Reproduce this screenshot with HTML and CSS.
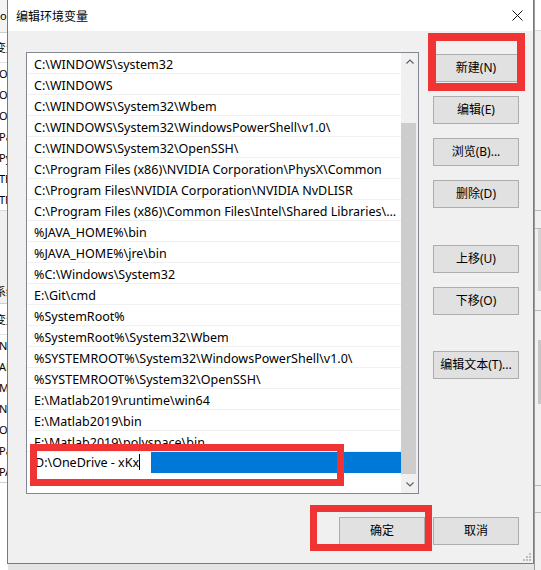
FILE: index.html
```html
<!DOCTYPE html>
<html lang="zh-CN">
<head>
<meta charset="utf-8">
<title>编辑环境变量</title>
<link rel="stylesheet" href="styles.css">
</head>
<body>
<div class="desk">
  <div class="bgwin">
    <div class="bg-head"><span class="frag">Doc</span></div>
    <div class="bg-table">
      <div class="bg-row hdr"><span class="frag">变量</span></div>
      <div class="bg-row"><span class="frag">OneDrive</span></div>
      <div class="bg-row"><span class="frag">OneDrive</span></div>
      <div class="bg-row"><span class="frag">OneDrive</span></div>
      <div class="bg-row"><span class="frag">Path</span></div>
      <div class="bg-row"><span class="frag">Python</span></div>
      <div class="bg-row"><span class="frag">TEMP</span></div>
      <div class="bg-row"><span class="frag">TMP</span></div>
    </div>
    <div class="bg-gap"></div>
    <div class="bg-title"><span class="frag">系统</span></div>
    <div class="bg-table two">
      <div class="bg-row hdr"><span class="frag">变量</span></div>
      <div class="bg-row"><span class="frag">NUMBER</span></div>
      <div class="bg-row"><span class="frag">ANDROID</span></div>
      <div class="bg-row"><span class="frag">MATLAB</span></div>
      <div class="bg-row"><span class="frag">NUMBER</span></div>
      <div class="bg-row"><span class="frag">OS</span></div>
      <div class="bg-row"><span class="frag">Path</span></div>
      <div class="bg-row"><span class="frag">PATHEXT</span></div>
    </div>
  </div>

  <div class="rightwin">
    <div class="rw-top"></div>
    <div class="rw-line l1"></div>
    <div class="rw-line l2"></div>
    <div class="rw-bar b1"></div>
    <div class="rw-line l3"></div>
    <div class="rw-bar b2"></div>
    <div class="rw-line l4"></div>
    <div class="rw-line l5"></div>
  </div>

  <div class="dialog">
    <div class="titlebar">
      <span class="title">编辑环境变量</span>
      <svg class="close" width="11" height="11" viewBox="0 0 11 11"><path d="M0.5 0.5 L10.5 10.5 M10.5 0.5 L0.5 10.5" stroke="#111" stroke-width="1" fill="none"/></svg>
    </div>
    <div class="body">
      <div class="main">
        <div class="listbox">
          <div class="rows">
            <div class="row">C:\WINDOWS\system32</div>
            <div class="row">C:\WINDOWS</div>
            <div class="row">C:\WINDOWS\System32\Wbem</div>
            <div class="row">C:\WINDOWS\System32\WindowsPowerShell\v1.0\</div>
            <div class="row">C:\WINDOWS\System32\OpenSSH\</div>
            <div class="row">C:\Program Files (x86)\NVIDIA Corporation\PhysX\Common</div>
            <div class="row">C:\Program Files\NVIDIA Corporation\NVIDIA NvDLISR</div>
            <div class="row">C:\Program Files (x86)\Common Files\Intel\Shared Libraries\...</div>
            <div class="row">%JAVA_HOME%\bin</div>
            <div class="row">%JAVA_HOME%\jre\bin</div>
            <div class="row">%C:\Windows\System32</div>
            <div class="row">E:\Git\cmd</div>
            <div class="row">%SystemRoot%</div>
            <div class="row">%SystemRoot%\System32\Wbem</div>
            <div class="row">%SYSTEMROOT%\System32\WindowsPowerShell\v1.0\</div>
            <div class="row">%SYSTEMROOT%\System32\OpenSSH\</div>
            <div class="row">E:\Matlab2019\runtime\win64</div>
            <div class="row">E:\Matlab2019\bin</div>
            <div class="row">E:\Matlab2019\polyspace\bin</div>
            <div class="row sel"><span class="edit">D:\OneDrive - xKx<span class="caret"></span></span></div>
          </div>
          <div class="scrollbar">
            <div class="sb-btn">
              <svg width="8" height="5" viewBox="0 0 8 5"><path d="M0.5 4.5 L4 1 L7.5 4.5" stroke="#606060" stroke-width="1.2" fill="none"/></svg>
            </div>
            <div class="sb-track">
              <div class="sb-thumb"></div>
            </div>
            <div class="sb-btn">
              <svg width="8" height="5" viewBox="0 0 8 5"><path d="M0.5 0.5 L4 4 L7.5 0.5" stroke="#606060" stroke-width="1.2" fill="none"/></svg>
            </div>
          </div>
        </div>
        <div class="side">
          <button class="btn">新建(N)</button>
          <button class="btn">编辑(E)</button>
          <button class="btn">浏览(B)...</button>
          <button class="btn">删除(D)</button>
          <button class="btn sep1">上移(U)</button>
          <button class="btn">下移(O)</button>
          <button class="btn sep2">编辑文本(T)...</button>
        </div>
      </div>
      <div class="footer">
        <button class="btn">确定</button>
        <button class="btn">取消</button>
      </div>
    </div>
    <svg class="grip" width="8" height="8" viewBox="0 0 8 8">
      <rect x="6" y="0" width="2" height="2" fill="#bdbdbd"/>
      <rect x="3" y="3" width="2" height="2" fill="#bdbdbd"/>
      <rect x="6" y="3" width="2" height="2" fill="#bdbdbd"/>
      <rect x="0" y="6" width="2" height="2" fill="#bdbdbd"/>
      <rect x="3" y="6" width="2" height="2" fill="#bdbdbd"/>
      <rect x="6" y="6" width="2" height="2" fill="#bdbdbd"/>
    </svg>
  </div>

  <div class="mark m-new"></div>
  <div class="mark m-edit"></div>
  <div class="mark m-ok"></div>
</div>
</body>
</html>
```
FILE: styles.css
```css
* { box-sizing: border-box; }
html, body { margin: 0; padding: 0; }
body {
  width: 541px;
  height: 570px;
  overflow: hidden;
  background: #e4e4e4;
  font-family: "Noto Sans", "Noto Sans CJK SC", sans-serif;
  font-size: 12px;
  color: #000;
}
.desk { position: relative; width: 541px; height: 570px; }

/* background window, left strip */
.bgwin {
  position: absolute;
  left: 0; top: 0;
  width: 8px; height: 570px;
  overflow: hidden;
  background: #ffffff;
  display: flex;
  flex-direction: column;
}
.frag { display: block; white-space: nowrap; font-size: 11px; }
.bg-head { height: 33px; background: #f3f3f3; border-bottom: 1px solid #cfcfcf; }
.bg-head .frag { margin-left: -8px; line-height: 32px; }
.bg-table { display: flex; flex-direction: column; background: #fff; flex: none; }
.bg-row { height: 21px; flex: none; }
.bg-row .frag { margin-left: -1px; line-height: 21px; }
.bg-row.hdr { height: 30px; border-bottom: 1px solid #e0e0e0; }
.bg-row.hdr .frag { margin-left: -5px; line-height: 30px; }
.bg-gap { height: 70px; flex: none; background: #f0f0f0; border-top: 1px solid #d8d8d8; }
.bg-title { height: 24px; flex: none; background: #f0f0f0; border-bottom: 1px solid #cfcfcf; }
.bg-title .frag { margin-left: -5px; line-height: 23px; }
.bg-table.two { border-bottom: 1px solid #cfcfcf; }
.bg-table.two .bg-row.hdr { height: 31px; }
.bg-table.two .bg-row.hdr .frag { line-height: 31px; }

/* background window, right strip */
.rightwin {
  position: absolute;
  left: 534px; top: 0;
  width: 7px; height: 570px;
  background: #f0f0f0;
  border-left: 1px solid #9a9a9a;
}
.rw-top { height: 31px; background: #fff; border-bottom: 1px solid #dadada; }
.rw-line { position: absolute; left: 0; right: 0; height: 1px; background: #b8b8b8; }
.rw-line.l1 { top: 210px; }
.rw-line.l2 { top: 228px; }
.rw-line.l3 { top: 310px; }
.rw-line.l4 { top: 485px; }
.rw-line.l5 { top: 512px; }
.rw-bar { position: absolute; left: 3px; right: 0; background: #d2d2d2; }
.rw-bar.b1 { top: 229px; height: 62px; }
.rw-bar.b2 { top: 340px; height: 64px; background: #c6c6c6; }

/* dialog */
.dialog {
  position: absolute;
  left: 7px; top: 0;
  width: 527px; height: 564px;
  background: #f0f0f0;
  border: 1px solid #7a7a7a;
  border-top: none;
  display: flex;
  flex-direction: column;
}
.titlebar {
  height: 31px;
  background: #ffffff;
  display: flex;
  align-items: center;
  justify-content: space-between;
  padding: 0 10px 0 8px;
  flex: none;
}
.title {
  font-family: "Noto Sans CJK SC", sans-serif;
  font-size: 12px;
  line-height: 31px;
}
.close { display: block; margin-top: -1px; }

.body {
  padding: 21px 14px 0 18px;
  display: flex;
  flex-direction: column;
}
.main { display: flex; gap: 14px; }

.listbox {
  width: 393px;
  height: 442px;
  border: 1px solid #828790;
  background: #fff;
  display: flex;
}
.rows { flex: 1; display: flex; flex-direction: column; min-width: 0; }
.row {
  height: 21px;
  flex: none;
  font-size: 12.5px;
  line-height: 19px;
  padding: 2px 0 0 7px;
  border-bottom: 1px solid #f1f1f1;
  white-space: nowrap;
  overflow: hidden;
}
.row.sel {
  background: #0078d7;
  padding: 0;
  border-bottom: none;
  display: flex;
  align-items: stretch;
}
.edit {
  width: 124px;
  background: #fff;
  padding: 1px 0 0 8px;
  line-height: 20px;
  white-space: nowrap;
}
.caret {
  display: inline-block;
  width: 1px;
  height: 16px;
  background: #000;
  vertical-align: -3px;
  margin-left: 0;
}

.scrollbar {
  width: 17px;
  flex: none;
  background: #f0f0f0;
  display: flex;
  flex-direction: column;
}
.sb-btn {
  height: 17px;
  display: flex;
  align-items: center;
  justify-content: center;
  flex: none;
}
.sb-btn svg { display: block; }
.sb-track { flex: 1; padding-top: 53px; display: flex; flex-direction: column; }
.sb-thumb { height: 351px; margin: 0 2px 0 0; background: #cdcdcd; }

.side {
  width: 86px;
  padding-top: 2px;
  display: flex;
  flex-direction: column;
  gap: 14px;
}
.btn {
  width: 86px;
  height: 28px;
  margin: 0;
  padding: 0;
  background: #e1e1e1;
  border: 1px solid #adadad;
  border-radius: 0;
  font-family: "Noto Sans", "Noto Sans CJK SC", sans-serif;
  font-size: 12px;
  color: #000;
  line-height: 26px;
  white-space: nowrap;
}
.side .sep1 { margin-top: 23px; }
.side .sep2 { margin-top: 22px; }

.footer {
  margin-top: 23px;
  display: flex;
  justify-content: flex-end;
  gap: 8px;
}

.grip { position: absolute; right: 2px; bottom: 2px; }

/* red annotations */
.mark {
  position: absolute;
  border: 7px solid #f03434;
  pointer-events: none;
}
.m-new { left: 428px; top: 33px; width: 97px; height: 58px; border-width: 8px; }
.m-edit { left: 30px; top: 444px; width: 314px; height: 42px; }
.m-ok { left: 310px; top: 505px; width: 122px; height: 46px; }
```
